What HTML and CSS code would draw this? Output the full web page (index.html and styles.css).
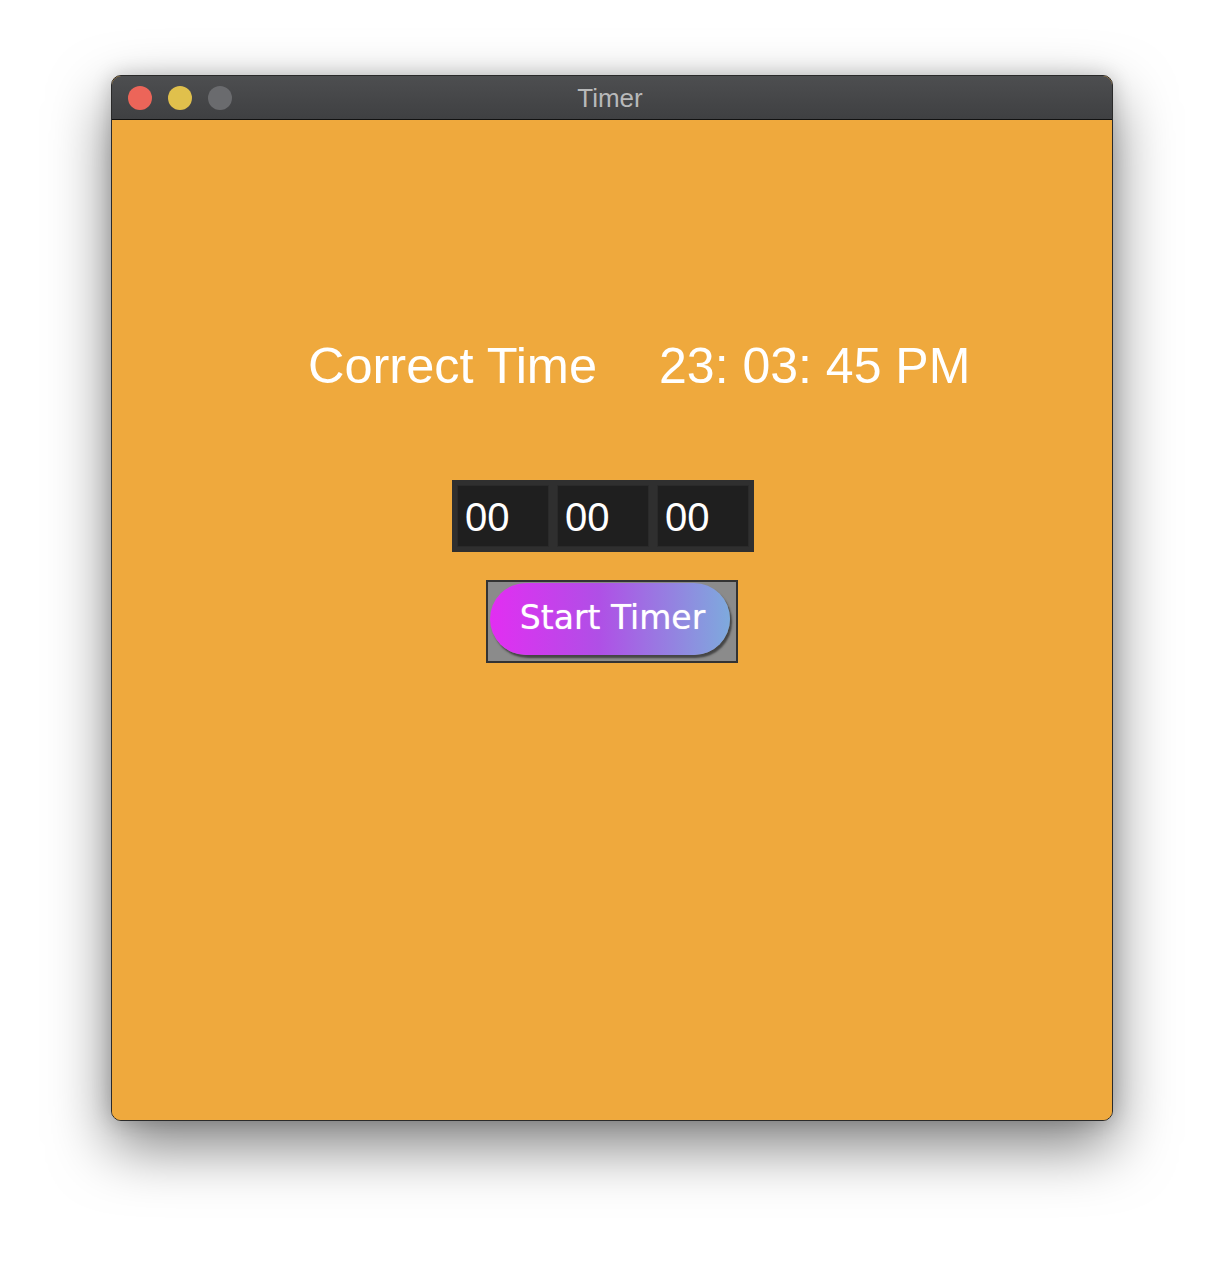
FILE: index.html
```html
<!DOCTYPE html>
<html>
<head>
<meta charset="utf-8">
<link rel="stylesheet" href="styles.css">
</head>
<body>
<div class="window">
  <div class="titlebar">
    <div class="lights">
      <span class="light red"></span>
      <span class="light yellow"></span>
      <span class="light gray"></span>
    </div>
    <div class="title">Timer</div>
  </div>
  <div class="content">
    <div class="clock-row">
      <span class="label">Correct Time</span>
      <span class="clock">23: 03: 45 PM</span>
    </div>
    <div class="timer-wrap">
      <div class="timer-frame">
        <div class="field">00</div>
        <div class="field">00</div>
        <div class="field">00</div>
      </div>
    </div>
    <div class="btn-wrap">
      <div class="btn-frame">
        <div class="pill">Start Timer</div>
      </div>
    </div>
  </div>
</div>
</body>
</html>
```
FILE: styles.css
```css
html, body {
  margin: 0;
  padding: 0;
  background: #ffffff;
}
body {
  padding: 75px 0 0 111px;
  width: 1224px;
  height: 1268px;
  box-sizing: border-box;
  overflow: hidden;
  font-family: "Liberation Sans", Arial, sans-serif;
}
.window {
  width: 1002px;
  height: 1046px;
  box-sizing: border-box;
  border: 1px solid #2a2a2a;
  border-radius: 10px;
  overflow: hidden;
  display: flex;
  flex-direction: column;
  box-shadow: 0 25px 60px rgba(0,0,0,0.5), 0 0 20px rgba(0,0,0,0.18);
  background: #efa93d;
}
.titlebar {
  height: 43px;
  flex: none;
  background: linear-gradient(#4d4e50, #3f4042);
  border-bottom: 1px solid #111;
  position: relative;
  display: flex;
  align-items: center;
}
.lights {
  display: flex;
  gap: 16px;
  padding-left: 16px;
}
.light {
  width: 24px;
  height: 24px;
  border-radius: 50%;
  display: block;
}
.red { background: #ec6559; }
.yellow { background: #e0c04c; }
.gray { background: #6a6b6e; }
.title {
  position: absolute;
  left: 0;
  right: 0;
  top: 0;
  bottom: 0;
  display: flex;
  align-items: center;
  justify-content: center;
  color: #b8b9ba;
  font-size: 26px;
  padding-top: 2px;
  padding-right: 4px;
}
.content {
  flex: 1;
  display: flex;
  flex-direction: column;
  background: #efa93d;
}
.clock-row {
  margin-top: 217px;
  padding-left: 196px;
  display: flex;
  gap: 62px;
  color: #ffffff;
  font-size: 50px;
  line-height: 58px;
}
.label {
  font-size: 50.5px;
}
.timer-wrap {
  margin-top: 85px;
  padding-left: 340px;
  display: flex;
}
.timer-frame {
  display: flex;
  gap: 8px;
  padding: 5px;
  background: #2f2f2f;
}
.field {
  width: 92px;
  height: 62px;
  box-sizing: border-box;
  background: #1f1f1f;
  border: 1px solid #2a2a2a;
  color: #ffffff;
  font-size: 40px;
  line-height: 62px;
  padding-left: 7px;
}
.btn-wrap {
  margin-top: 28px;
  display: flex;
  justify-content: center;
}
.btn-frame {
  width: 252px;
  height: 83px;
  box-sizing: border-box;
  border: 2px solid #333333;
  background: #8b8b8b;
  padding: 1px 6px 6px 2px;
}
.pill {
  width: 240px;
  height: 72px;
  border-radius: 36px;
  background: linear-gradient(90deg, #e22ef2 0%, #b04fe6 45%, #7eaadd 100%);
  box-shadow: 2px 3px 2px rgba(40,40,40,0.7);
  color: #ffffff;
  font-family: "DejaVu Sans", Verdana, sans-serif;
  font-size: 33px;
  line-height: 70px;
  text-align: center;
  padding-left: 5px;
  box-sizing: border-box;
  text-shadow: 0 0 1px rgba(255,255,255,0.6);
}
```
